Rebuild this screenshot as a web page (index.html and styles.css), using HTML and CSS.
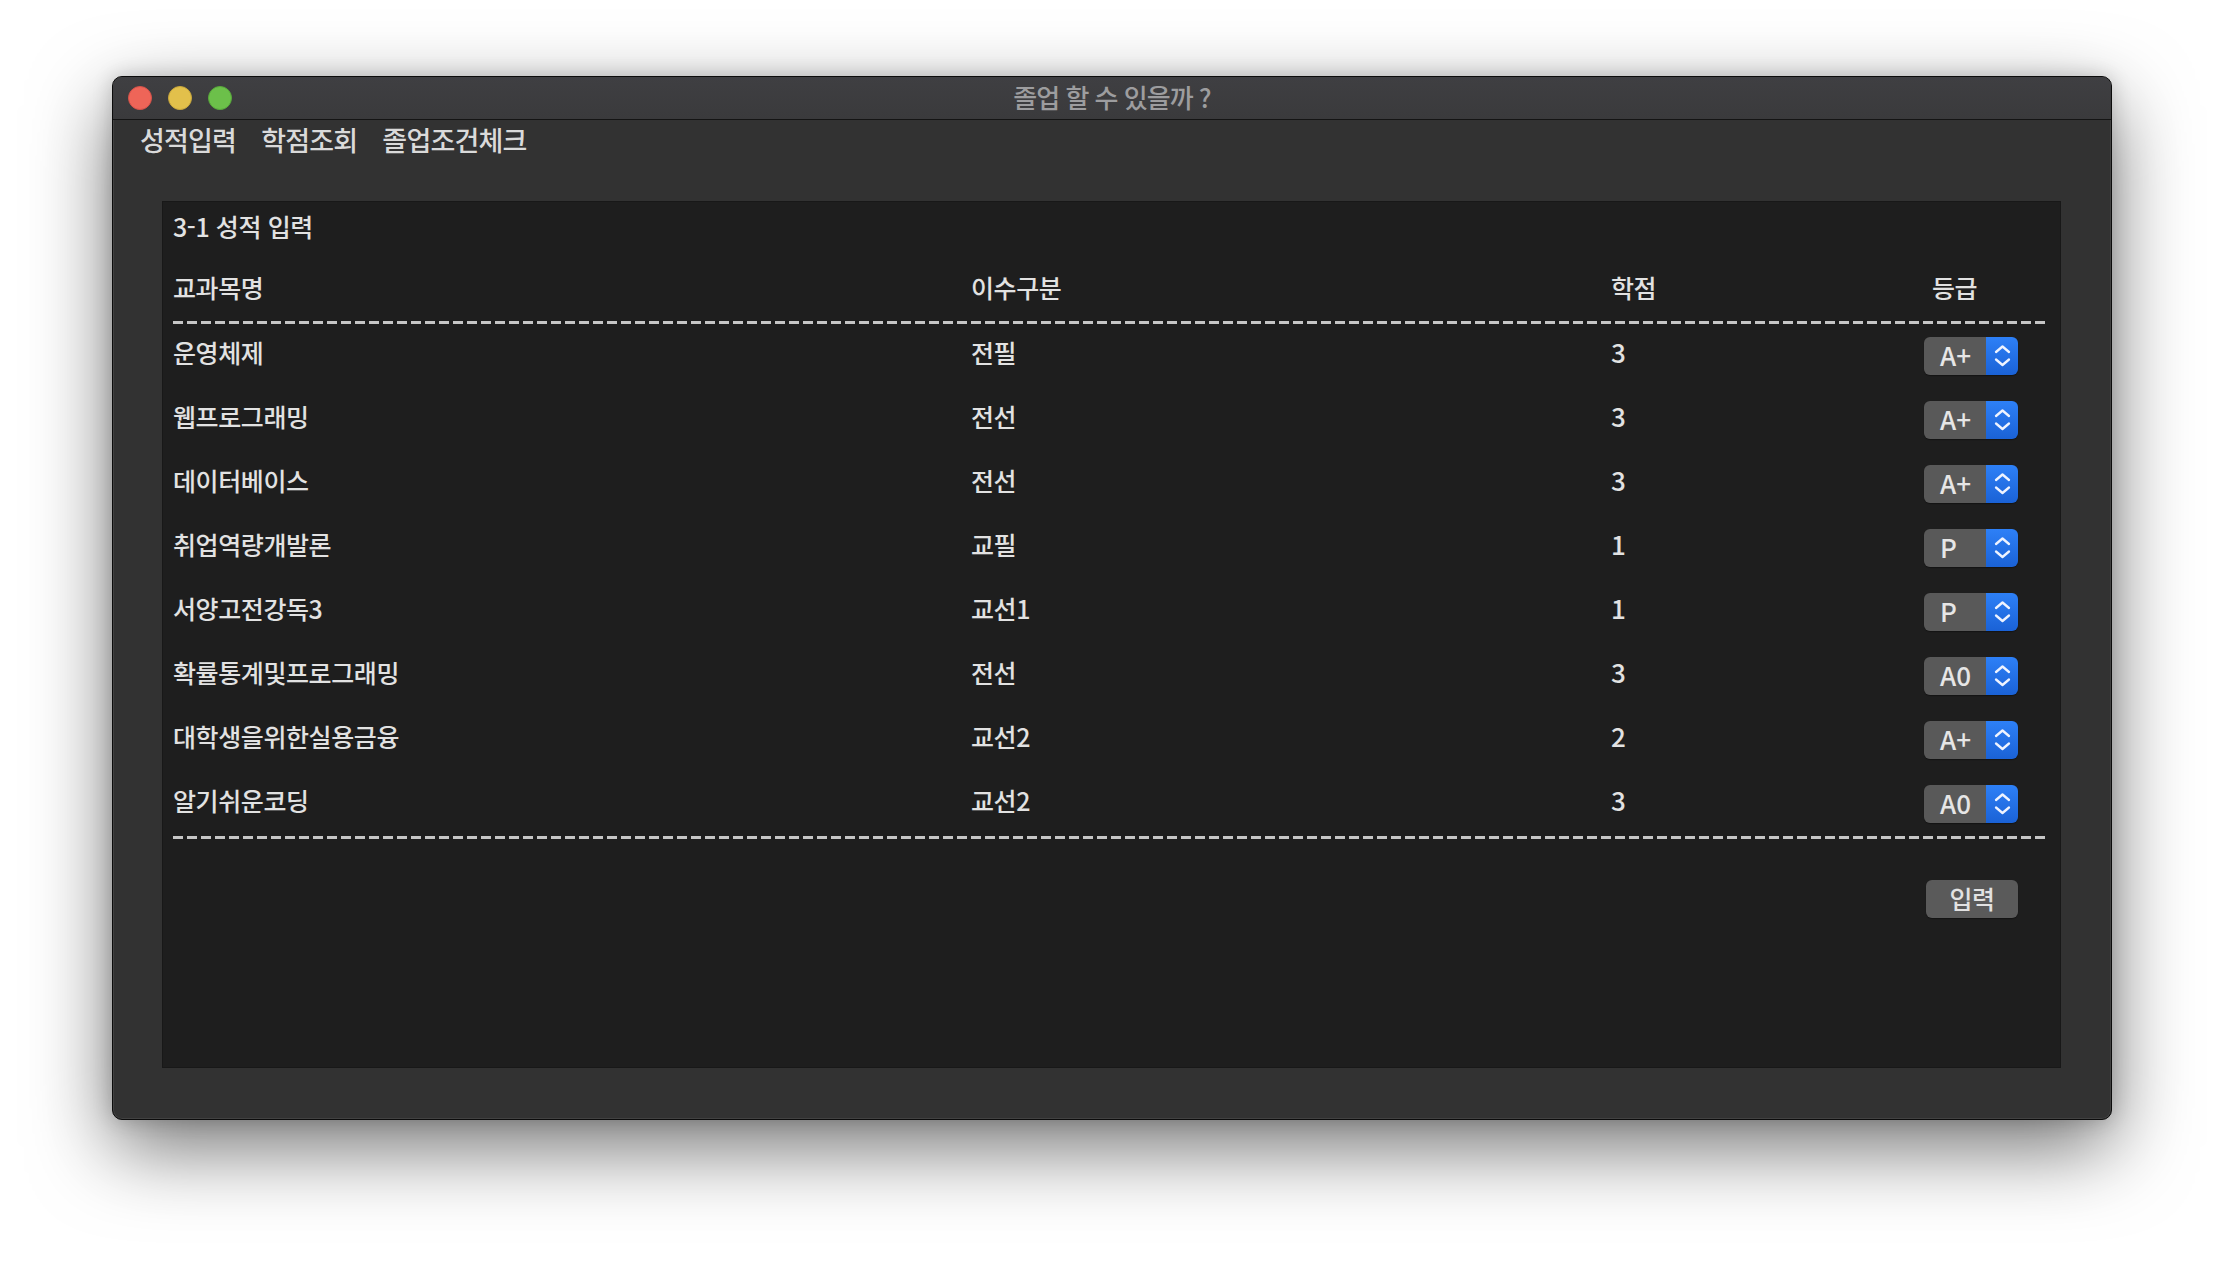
FILE: index.html
```html
<!DOCTYPE html>
<html lang="ko">
<head>
<meta charset="utf-8">
<title>졸업 할 수 있을까 ?</title>
<link rel="stylesheet" href="styles.css">
</head>
<body>
<div class="window">
  <header class="titlebar">
    <div class="lights">
      <span class="light red"></span>
      <span class="light yellow"></span>
      <span class="light green"></span>
    </div>
    <div class="title">졸업 할 수 있을까 ?</div>
    <div></div>
  </header>
  <div class="content">
    <nav class="menu">
      <span>성적입력</span>
      <span>학점조회</span>
      <span>졸업조건체크</span>
    </nav>
    <section class="panel">
      <div class="panel-title">3-1 성적 입력</div>
      <div class="grid head">
        <div>교과목명</div><div>이수구분</div><div>학점</div><div class="grade-h">등급</div>
      </div>
      <div class="dash"></div>
      <div class="rows">
        <div class="grid row"><div class="cell">운영체제</div><div class="cell">전필</div><div class="cell num">3</div><div class="stepper"><span class="val">A+</span><span class="arrows"><svg viewBox="0 0 32 38" width="32" height="38"><path d="M10 15 L16.5 9.5 L23 15 M10 22.5 L16.5 28 L23 22.5"/></svg></span></div></div>
        <div class="grid row"><div class="cell">웹프로그래밍</div><div class="cell">전선</div><div class="cell num">3</div><div class="stepper"><span class="val">A+</span><span class="arrows"><svg viewBox="0 0 32 38" width="32" height="38"><path d="M10 15 L16.5 9.5 L23 15 M10 22.5 L16.5 28 L23 22.5"/></svg></span></div></div>
        <div class="grid row"><div class="cell">데이터베이스</div><div class="cell">전선</div><div class="cell num">3</div><div class="stepper"><span class="val">A+</span><span class="arrows"><svg viewBox="0 0 32 38" width="32" height="38"><path d="M10 15 L16.5 9.5 L23 15 M10 22.5 L16.5 28 L23 22.5"/></svg></span></div></div>
        <div class="grid row"><div class="cell">취업역량개발론</div><div class="cell">교필</div><div class="cell num">1</div><div class="stepper"><span class="val">P</span><span class="arrows"><svg viewBox="0 0 32 38" width="32" height="38"><path d="M10 15 L16.5 9.5 L23 15 M10 22.5 L16.5 28 L23 22.5"/></svg></span></div></div>
        <div class="grid row"><div class="cell">서양고전강독3</div><div class="cell">교선1</div><div class="cell num">1</div><div class="stepper"><span class="val">P</span><span class="arrows"><svg viewBox="0 0 32 38" width="32" height="38"><path d="M10 15 L16.5 9.5 L23 15 M10 22.5 L16.5 28 L23 22.5"/></svg></span></div></div>
        <div class="grid row"><div class="cell">확률통계및프로그래밍</div><div class="cell">전선</div><div class="cell num">3</div><div class="stepper"><span class="val">A0</span><span class="arrows"><svg viewBox="0 0 32 38" width="32" height="38"><path d="M10 15 L16.5 9.5 L23 15 M10 22.5 L16.5 28 L23 22.5"/></svg></span></div></div>
        <div class="grid row"><div class="cell">대학생을위한실용금융</div><div class="cell">교선2</div><div class="cell num">2</div><div class="stepper"><span class="val">A+</span><span class="arrows"><svg viewBox="0 0 32 38" width="32" height="38"><path d="M10 15 L16.5 9.5 L23 15 M10 22.5 L16.5 28 L23 22.5"/></svg></span></div></div>
        <div class="grid row"><div class="cell">알기쉬운코딩</div><div class="cell">교선2</div><div class="cell num">3</div><div class="stepper"><span class="val">A0</span><span class="arrows"><svg viewBox="0 0 32 38" width="32" height="38"><path d="M10 15 L16.5 9.5 L23 15 M10 22.5 L16.5 28 L23 22.5"/></svg></span></div></div>
      </div>
      <div class="dash"></div>
      <div class="actions"><button class="btn">입력</button></div>
    </section>
  </div>
</div>
</body>
</html>
```
FILE: styles.css
```css
html, body {
  margin: 0;
  height: 100%;
}
body {
  background: #ffffff;
  overflow: hidden;
  font-family: "Noto Sans CJK KR", "Noto Sans", sans-serif;
}
.window {
  box-sizing: border-box;
  width: 2000px;
  height: 1044px;
  margin: 76px 0 0 112px;
  border: 1px solid #0c0c0c;
  border-radius: 10px;
  background: #323232;
  box-shadow: 0 28px 80px rgba(0, 0, 0, 0.55), 0 0 20px rgba(0, 0, 0, 0.18), inset 0 0 0 1px rgba(255, 255, 255, 0.08);
  overflow: hidden;
}
.titlebar {
  height: 42px;
  border-bottom: 1px solid #141414;
  background: linear-gradient(#3f3f42, #3a3a3c);
  display: grid;
  grid-template-columns: 1fr auto 1fr;
  align-items: center;
}
.lights {
  display: flex;
  gap: 16px;
  padding-left: 15px;
}
.light {
  width: 24px;
  height: 24px;
  border-radius: 50%;
  box-sizing: border-box;
}
.red { background: #ee6558; border: 1px solid #d5524a; }
.yellow { background: #e2c04b; border: 1px solid #c9a73c; }
.green { background: #6cc04a; border: 1px solid #58a83b; }
.title {
  color: #9d9d9f;
  font-size: 26px;
  font-weight: 500;
  letter-spacing: -1px;
  line-height: 40px;
  padding-bottom: 2px;
}
.content {
  height: 999px;
}
.menu {
  display: flex;
  gap: 25px;
  padding-left: 27px;
  height: 81px;
  box-sizing: border-box;
  font-size: 27px;
  font-weight: 500;
  letter-spacing: -0.8px;
  line-height: 40px;
  color: #dadada;
}
.panel {
  box-sizing: border-box;
  height: 867px;
  margin: 0 50px 0 49px;
  background: #1e1e1e;
  border: 1px solid #181818;
  padding: 0 15px 0 10px;
  color: #e2e2e2;
  font-size: 25px;
  font-weight: 500;
  letter-spacing: -0.4px;
}
.panel-title {
  height: 48px;
  line-height: 48px;
}
.grid {
  display: grid;
  grid-template-columns: 798px 640px 313px 94px;
}
.head {
  box-sizing: border-box;
  height: 71px;
  padding-top: 4px;
  line-height: 67px;
}
.grade-h {
  padding-left: 8px;
}
.dash {
  height: 3px;
  background: repeating-linear-gradient(90deg, #c6c6c6 0 10px, transparent 10px 14px);
}
.row {
  height: 64px;
  align-items: start;
}
.cell {
  line-height: 56px;
}
.num {
  font-size: 26px;
}
.stepper {
  align-self: center;
  display: flex;
  height: 38px;
  border-radius: 6px;
  overflow: hidden;
  letter-spacing: 0;
  box-shadow: 0 1px 1px rgba(0, 0, 0, 0.35);
}
.val {
  flex: 1;
  background: #595959;
  padding-left: 16px;
  font-size: 26px;
  line-height: 36px;
  color: #e6e6e6;
}
.arrows {
  width: 32px;
  background: linear-gradient(#2d80f7, #1a62d6);
  display: flex;
}
.arrows svg {
  display: block;
}
.arrows path {
  fill: none;
  stroke: #eef3ff;
  stroke-width: 2.3;
  stroke-linecap: round;
  stroke-linejoin: round;
}
.actions {
  display: flex;
  justify-content: flex-end;
  padding-right: 27px;
  margin-top: 41px;
}
.btn {
  width: 92px;
  height: 38px;
  border: 0;
  border-radius: 6px;
  background: #5a5a5a;
  color: #e2e2e2;
  font-family: "Noto Sans CJK KR", sans-serif;
  font-size: 25px;
  font-weight: 500;
  letter-spacing: -0.4px;
  line-height: 36px;
  padding: 0 0 2px 0;
  box-shadow: 0 1px 1px rgba(0, 0, 0, 0.35);
}
```
